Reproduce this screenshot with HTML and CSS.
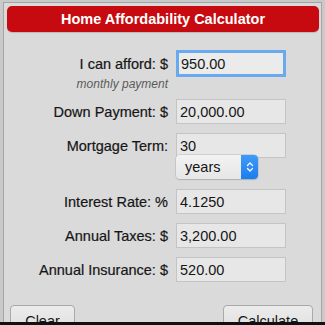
FILE: index.html
```html
<!DOCTYPE html>
<html>
<head>
<meta charset="utf-8">
<link rel="stylesheet" href="styles.css">
</head>
<body>
<div class="panel">
  <div class="header">Home Affordability Calculator</div>
  <div class="form">
    <div class="row first">
      <label class="label">I can afford: $</label>
      <input class="field focus" type="text" value="950.00">
    </div>
    <div class="note">monthly payment</div>
    <div class="row">
      <label class="label">Down Payment: $</label>
      <input class="field" type="text" value="20,000.00">
    </div>
    <div class="row">
      <label class="label">Mortgage Term:</label>
      <input class="field" type="text" value="30">
    </div>
    <div class="row sel-row">
      <span class="label"></span>
      <div class="select">
        <span class="sel-text">years</span>
        <span class="stepper">
          <svg width="8" height="12" viewBox="0 0 8 12"><path d="M1.5 4.5 L4 2 L6.5 4.5 M1.5 7.5 L4 10 L6.5 7.5" fill="none" stroke="#fff" stroke-width="1.3" stroke-linecap="round" stroke-linejoin="round"/></svg>
        </span>
      </div>
    </div>
    <div class="row">
      <label class="label">Interest Rate: %</label>
      <input class="field" type="text" value="4.1250">
    </div>
    <div class="row">
      <label class="label">Annual Taxes: $</label>
      <input class="field" type="text" value="3,200.00">
    </div>
    <div class="row">
      <label class="label">Annual Insurance: $</label>
      <input class="field" type="text" value="520.00">
    </div>
  </div>
  <div class="buttons">
    <button class="btn clear">Clear</button>
    <button class="btn calc">Calculate</button>
  </div>
</div>
<div class="bottombar"></div>
</body>
</html>
```
FILE: styles.css
```css
html, body {
  margin: 0;
  padding: 0;
  width: 325px;
  height: 325px;
  overflow: hidden;
  background: #c9c9c9;
  font-family: "Liberation Sans", Arial, sans-serif;
  position: relative;
}
.panel {
  margin: 2px 3px 0 3px;
  height: 330px;
  border: 1px solid #a5a5a5;
  background: #dadada;
  padding: 3px 2px 0 3px;
  box-sizing: border-box;
}
.header {
  height: 26px;
  background: #c70a0f;
  border-radius: 5px;
  color: #fff;
  font-weight: bold;
  font-size: 14.5px;
  line-height: 26px;
  text-align: center;
  box-shadow: 0 1px 1px rgba(0,0,0,0.15);
}
.form {
  padding-top: 18px;
}
.row {
  display: flex;
  align-items: center;
  margin-bottom: 9px;
}
.row.first {
  margin-bottom: 0;
}
.label {
  width: 169px;
  text-align: right;
  font-size: 14.5px;
  color: #161616;
  padding-right: 8px;
  box-sizing: border-box;
  flex: none;
  -webkit-text-stroke: 0.2px #161616;
}
.field {
  width: 110px;
  height: 25px;
  box-sizing: border-box;
  border: 1px solid #c4c4c4;
  background: #e7e7e7;
  font-family: "Liberation Sans", Arial, sans-serif;
  font-size: 14.5px;
  color: #161616;
  padding: 0 0 0 3px;
  margin: 0;
  outline: none;
}
.field.focus {
  height: 27px;
  border: 3px solid #69a9ee;
  padding-left: 2px;
  background: #ebebeb;
}
.note {
  width: 169px;
  box-sizing: border-box;
  padding-right: 8px;
  text-align: right;
  font-size: 12px;
  font-style: italic;
  color: #5a5a5a;
  height: 22px;
  line-height: 14px;
}
.row.sel-row {
  margin-top: -12px;
  margin-bottom: 10px;
}
.select {
  width: 82px;
  height: 24px;
  box-sizing: border-box;
  border-radius: 4px;
  background: linear-gradient(#f2f2f2, #e6e6e6);
  box-shadow: 0 0 0 0.5px #b8b8b8, 0 1px 1px rgba(0,0,0,0.2);
  display: flex;
  align-items: center;
  overflow: hidden;
}
.sel-text {
  flex: 1;
  font-size: 14.5px;
  padding-left: 9px;
  color: #161616;
}
.stepper {
  width: 17px;
  height: 24px;
  background: linear-gradient(#3f9bf8, #1a7ef0);
  display: flex;
  align-items: center;
  justify-content: center;
}
.buttons {
  display: flex;
  justify-content: space-between;
  padding: 14px 6px 0 3px;
}
.btn {
  height: 26px;
  box-sizing: border-box;
  border: 1px solid #a9a9a9;
  border-radius: 4px;
  background: linear-gradient(#ececec, #e0e0e0);
  font-family: "Liberation Sans", Arial, sans-serif;
  font-size: 14.5px;
  color: #161616;
  padding: 6px 0 0 0;
  margin: 0;
  vertical-align: top;
  line-height: 18px;
}
.btn.clear { width: 65px; }
.btn.calc { width: 90px; }
.bottombar {
  position: absolute;
  left: 0;
  right: 0;
  bottom: 0;
  height: 3px;
  background: #111;
}
```
